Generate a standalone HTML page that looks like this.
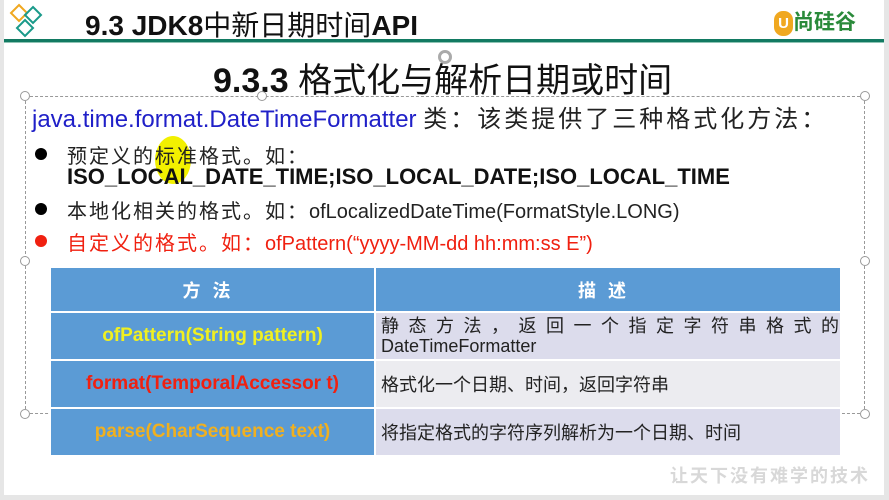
<!DOCTYPE html>
<html><head><meta charset="utf-8"><style>
*{margin:0;padding:0;box-sizing:border-box}
body{width:889px;height:500px;background:#e6e6e6;position:relative;overflow:hidden;font-family:"Liberation Sans","Noto Sans CJK SC",sans-serif}
.slide{position:absolute;left:4px;top:0;width:880px;height:495px;background:#fff}
.a{position:absolute;white-space:nowrap}
table{position:absolute;left:49px;top:266px;border-collapse:collapse;width:793px;table-layout:fixed}
td{border:2px solid #fff;text-align:center;font-size:19px;overflow:hidden;white-space:nowrap}
.h td{background:#5b9bd5;color:#fff;font-weight:bold;height:45px;letter-spacing:12px;font-size:18px;font-family:"Noto Sans CJK SC",sans-serif}
.l{background:#5b9bd5;width:325px;font-weight:bold}
.r{text-align:left;padding-left:5px;color:#222;font-size:18px}
.hd{position:absolute;width:10px;height:10px;border:1.5px solid #999;border-radius:50%;background:#fff}
.b{position:absolute;left:35px;width:12px;height:12px;border-radius:50%;background:#000}
.t{position:absolute;left:67px;font-size:20px;white-space:nowrap}
.c{letter-spacing:2px}
</style></head><body>
<div class="slide"></div>
<svg class="a" style="left:8px;top:3px" width="40" height="38" viewBox="0 0 40 38">
<path d="M11 2 L19 10 L11 18 L3 10 Z" fill="none" stroke="#f0a820" stroke-width="2"/>
<path d="M25 4 L33 12 L25 20 L17 12 Z" fill="none" stroke="#1a9a8a" stroke-width="2"/>
<path d="M17 17 L25 25 L17 33 L9 25 Z" fill="none" stroke="#1a9a8a" stroke-width="2"/>
</svg>
<div class="a" style="left:85px;top:4px;font-size:28px;font-weight:bold;color:#111">9.3 JDK8<span style="font-weight:normal">中新日期时间</span>API</div>
<div class="a" style="left:774px;top:6px;font-size:21px;color:#2a8a3a;font-weight:bold"><span style="display:inline-block;width:19px;height:25px;border-radius:9px;background:#f0a820;color:#fff;font-size:15px;text-align:center;vertical-align:middle;line-height:25px">U</span>尚硅谷</div>
<div class="a" style="left:4px;top:39px;width:880px;height:3px;background:#127a62"></div>
<div class="a" style="left:4px;top:42px;width:880px;height:1px;background:#8fc4b4"></div>
<div class="a" style="left:213px;top:53px;font-size:34px;color:#111"><b>9.3.3</b> 格式化与解析日期或时间</div>
<div class="a" style="left:438px;top:50px;width:14px;height:14px;border:3px solid #aaa;border-radius:50%"></div>
<div class="a" style="left:25px;top:96px;width:840px;height:318px;border:1px dashed #999"></div>
<div class="hd" style="left:20px;top:91px"></div><div class="hd" style="left:257px;top:91px"></div><div class="hd" style="left:860px;top:91px"></div>
<div class="hd" style="left:20px;top:409px"></div><div class="hd" style="left:257px;top:409px"></div><div class="hd" style="left:860px;top:409px"></div>
<div class="hd" style="left:20px;top:256px"></div><div class="hd" style="left:860px;top:256px"></div>
<div class="a" style="left:32px;top:99px;font-size:24px;color:#2020c8">java.time.format.DateTimeFormatter <span style="color:#222;letter-spacing:3px">类：该类提供了三种格式化方法：</span></div>
<div class="a" style="left:155px;top:136px;width:36px;height:48px;border-radius:50%;background:#f2f000"></div>
<div class="b" style="top:148px"></div>
<div class="t" style="top:140px;color:#222"><span class="c">预定义的标准格式。如：</span></div>
<div class="t" style="top:164px;font-size:22px;font-weight:bold;color:#111">ISO_LOCAL_DATE_TIME;ISO_LOCAL_DATE;ISO_LOCAL_TIME</div>
<div class="b" style="top:203px"></div>
<div class="t" style="top:195px;color:#222"><span class="c">本地化相关的格式。如：</span>ofLocalizedDateTime(FormatStyle.LONG)</div>
<div class="b" style="top:235px;background:#f02010"></div>
<div class="t" style="top:227px;color:#f02010"><span class="c">自定义的格式。如：</span>ofPattern(“yyyy-MM-dd hh:mm:ss E”)</div>
<table>
<colgroup><col style="width:325px"><col></colgroup>
<tr class="h"><td>方法</td><td>描述</td></tr>
<tr style="height:48px"><td class="l" style="color:#f0f020">ofPattern(String pattern)</td><td class="r" style="background:#dcdcec;line-height:20px"><span style="letter-spacing:9.5px">静态方法，返回一个指定字符串格式的</span><br>DateTimeFormatter</td></tr>
<tr style="height:48px"><td class="l" style="color:#f02010">format(TemporalAccessor t)</td><td class="r" style="background:#ececf0">格式化一个日期、时间，返回字符串</td></tr>
<tr style="height:48px"><td class="l" style="color:#f0b020">parse(CharSequence text)</td><td class="r" style="background:#dcdcec">将指定格式的字符序列解析为一个日期、时间</td></tr>
</table>
<div class="a" style="left:670px;top:462px;font-size:18px;color:#d8d8d8;font-weight:bold;letter-spacing:2px">让天下没有难学的技术</div>
</body></html>
